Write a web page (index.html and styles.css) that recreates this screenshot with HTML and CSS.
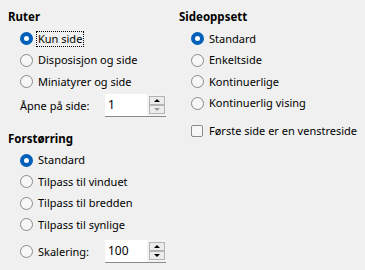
FILE: index.html
```html
<!DOCTYPE html>
<html lang="nb">
<head>
    <meta charset="UTF-8">
    <title>Visning</title>
    <link rel="stylesheet" href="styles.css">
</head>
<body>
    <div class="panel">
        <div class="column">
            <section class="group">
                <h2>Ruter</h2>
                <label class="option"><span class="radio checked"></span><span class="caption focused">Kun side</span></label>
                <label class="option"><span class="radio"></span><span class="caption">Disposisjon og side</span></label>
                <label class="option"><span class="radio"></span><span class="caption">Miniatyrer og side</span></label>
                <div class="spin-row">
                    <span class="spin-label">Åpne på side:</span>
                    <div class="spinbox">
                        <span class="spin-value">1</span>
                        <div class="spin-buttons">
                            <span class="spin-btn up"></span>
                            <span class="spin-btn down disabled"></span>
                        </div>
                    </div>
                </div>
            </section>

            <section class="group zoom-group">
                <h2>Forstørring</h2>
                <label class="option"><span class="radio checked"></span><span class="caption">Standard</span></label>
                <label class="option"><span class="radio"></span><span class="caption">Tilpass til vinduet</span></label>
                <label class="option"><span class="radio"></span><span class="caption">Tilpass til bredden</span></label>
                <label class="option"><span class="radio"></span><span class="caption">Tilpass til synlige</span></label>
                <div class="spin-row scale-row">
                    <span class="spin-label option"><span class="radio"></span><span class="caption">Skalering:</span></span>
                    <div class="spinbox">
                        <span class="spin-value">100</span>
                        <div class="spin-buttons">
                            <span class="spin-btn up"></span>
                            <span class="spin-btn down"></span>
                        </div>
                    </div>
                </div>
            </section>
        </div>

        <div class="column">
            <section class="group">
                <h2>Sideoppsett</h2>
                <label class="option"><span class="radio checked"></span><span class="caption">Standard</span></label>
                <label class="option"><span class="radio"></span><span class="caption">Enkeltside</span></label>
                <label class="option"><span class="radio"></span><span class="caption">Kontinuerlige</span></label>
                <label class="option"><span class="radio"></span><span class="caption">Kontinuerlig vising</span></label>
                <label class="option check-row"><span class="checkbox"></span><span class="caption">Første side er en venstreside</span></label>
            </section>
        </div>
    </div>
</body>
</html>
```

FILE: styles.css
```css
body {
    margin: 0;
    background-color: #f0f0f0;
    color: #000;
    font-family: "Noto Sans", "Open Sans", sans-serif;
    font-size: 11px;
    white-space: nowrap;
}
.panel {
    display: grid;
    grid-template-columns: 171px 1fr;
    padding: 9px 0 0 8px;
}
.group h2 {
    margin: 0 0 3px 0;
    font-size: 11.5px;
    font-weight: bold;
    line-height: 16px;
}
.zoom-group {
    margin-top: 13px;
}
.option {
    display: flex;
    align-items: center;
    height: 21.5px;
    padding-left: 12px;
}
.radio {
    box-sizing: border-box;
    width: 13px;
    height: 13px;
    border-radius: 50%;
    border: 1px solid #8a8a8a;
    background: #f7f7f7;
    margin-right: 3px;
    flex: none;
}
.radio.checked {
    border: 4px solid #005fb8;
    background: #fff;
}
.checkbox {
    box-sizing: border-box;
    width: 12px;
    height: 12px;
    border-radius: 2px;
    border: 1px solid #8a8a8a;
    background: #f7f7f7;
    margin-right: 4px;
    flex: none;
}
.check-row {
    margin-top: 6px;
}
.caption {
    line-height: 14px;
    padding: 0 1px;
    border: 1px solid transparent;
}
.caption.focused {
    border: 1px dotted #000;
}
.spin-row {
    display: grid;
    grid-template-columns: 85px 61px;
    align-items: center;
    height: 24px;
    margin-left: 12px;
    margin-top: 1px;
}
.spin-row .spin-label.option {
    padding-left: 0;
    height: auto;
}
.scale-row {
    margin-top: 4px;
}
.spinbox {
    box-sizing: border-box;
    height: 23px;
    display: flex;
    background: #fff;
    border-bottom: 1px solid #8a8a8a;
}
.spin-value {
    flex: 1;
    padding-left: 3px;
    line-height: 22px;
    font-size: 12px;
}
.spin-buttons {
    width: 19px;
    background: #f3f3f3;
    display: flex;
    flex-direction: column;
    justify-content: center;
    align-items: center;
}
.spin-btn {
    box-sizing: border-box;
    width: 16px;
    height: 9px;
    border: 1px solid #b4b4b4;
    background: #ececec;
    position: relative;
}
.spin-btn::after {
    content: "";
    position: absolute;
    left: 4px;
    top: 2px;
    border-left: 3px solid transparent;
    border-right: 3px solid transparent;
}
.spin-btn.up::after {
    border-bottom: 3px solid #000;
}
.spin-btn.down::after {
    border-top: 3px solid #000;
}
.spin-btn.disabled::after {
    border-top-color: #9a9a9a;
}
```
